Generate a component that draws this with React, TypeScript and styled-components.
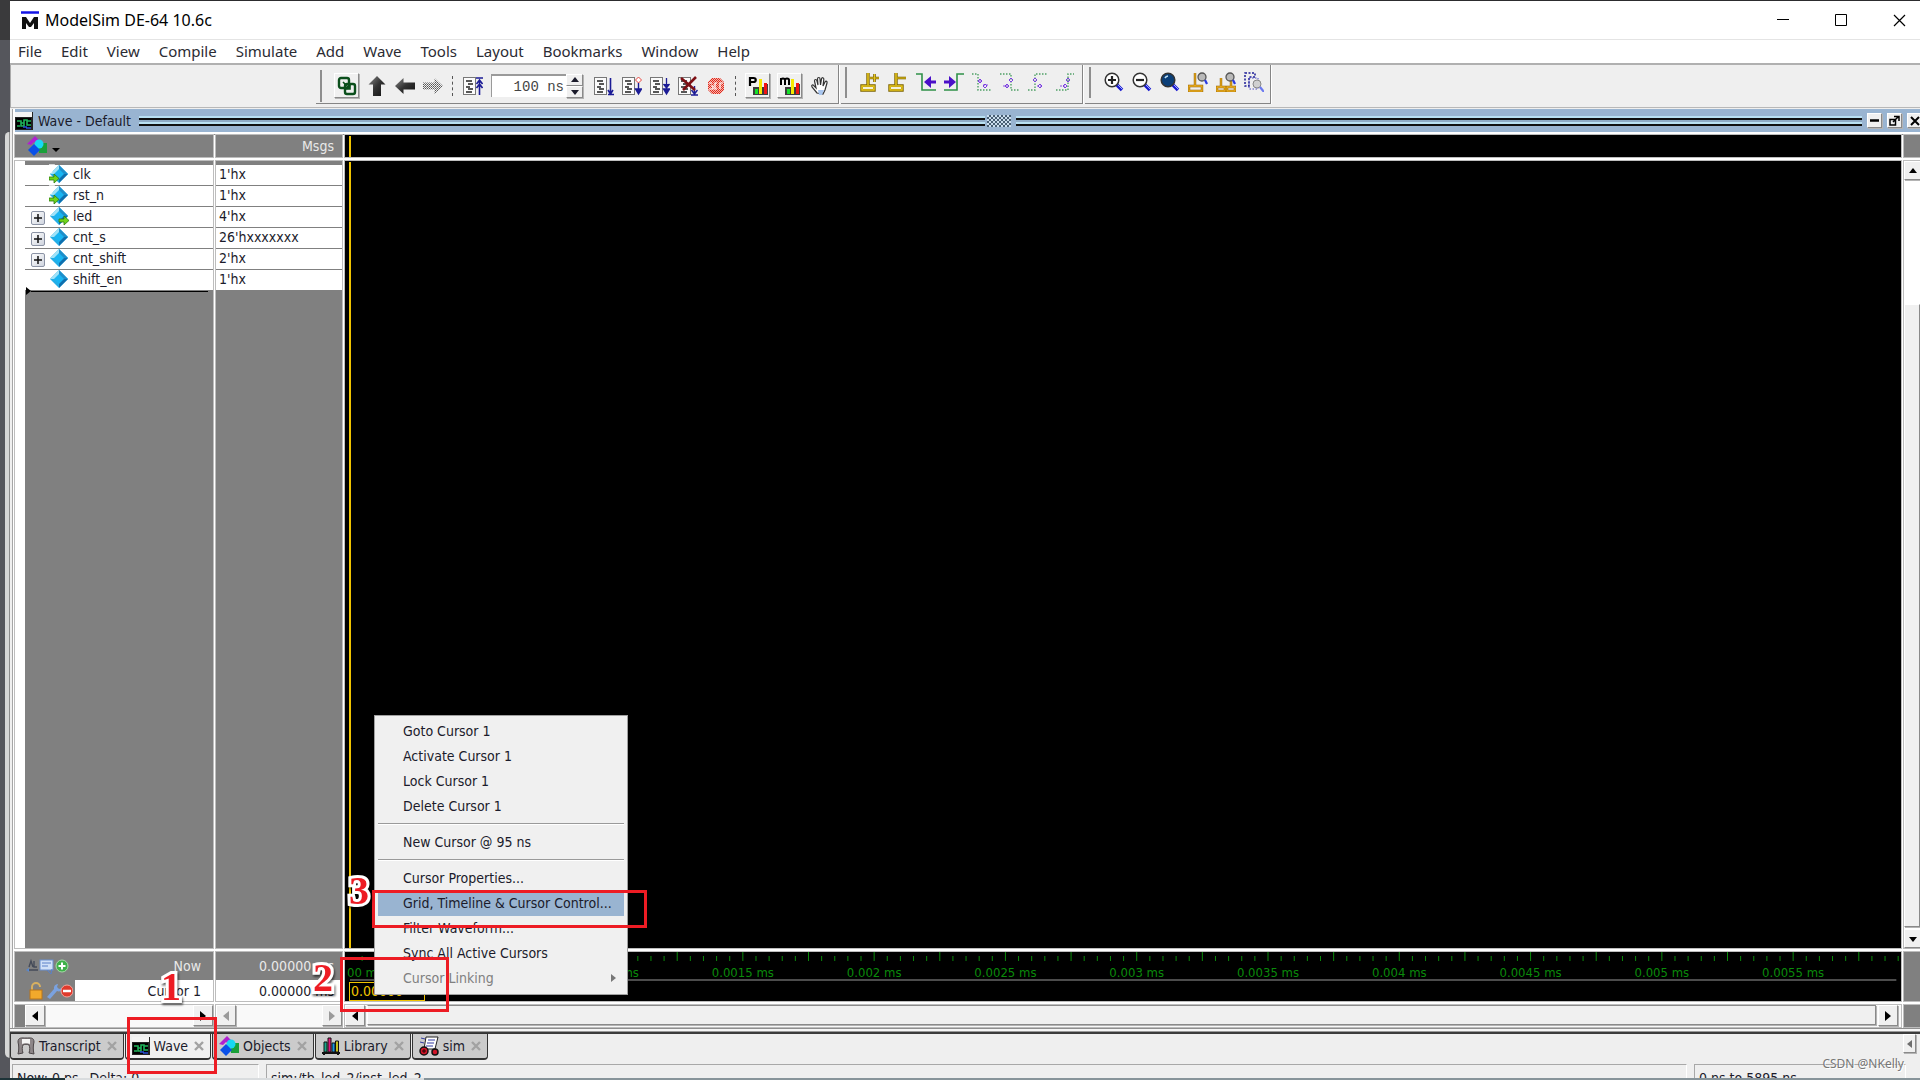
import React from 'react';
import styled, { createGlobalStyle, css } from 'styled-components';

const ui = `"DejaVu Sans Condensed", "Noto Sans", sans-serif`;
const sys = `"Noto Sans", "Open Sans", sans-serif`;

const Global = createGlobalStyle`
  *, *::before, *::after { box-sizing: border-box; }
  html, body { margin: 0; height: 100%; overflow: hidden; background: #55565c; }
  body { font-family: ${ui}; font-size: 13px; color: #1b1b2b; }
  button { font: inherit; color: inherit; border: 0; padding: 0; margin: 0; background: none; }
  svg { display: block; flex: none; }
`;

const bevel = css`
  background: #f0f0f0;
  border: 1px solid;
  border-color: #fff #8a8a8a #8a8a8a #fff;
  box-shadow: 1px 1px 0 #b4b4b4;
`;

/* ---------- shell ---------- */
const Desktop = styled.div`
  position: relative;
  display: flex;
  flex-direction: column;
  height: 100vh;
  overflow: hidden;
`;
const Screen = styled.div`
  display: flex;
  flex: 1;
  min-height: 0;
`;
const Backdrop = styled.div`
  flex: none;
  width: 10px;
  padding: 132px 0 20px 5px;
  background: linear-gradient(#3a3a3c 40px, #55565c 40px);
`;
const Sheet = styled.div`
  height: 100%;
  background: #d6d6d6;
  border-right: 1px solid #8c8c8c;
  border-radius: 5px 0 0 6px;
`;
const Main = styled.main`
  flex: 1;
  min-width: 0;
  display: flex;
  flex-direction: column;
  background: #efefef;
  border-top: 1px solid #2c2c2e;
`;
const Taskbar = styled.div`
  flex: none;
  height: 2px;
  background: linear-gradient(90deg, #1d3338 65px, #d9dcde 65px, #d9dcde 424px, #87949a 424px);
`;

/* ---------- title + menu ---------- */
const TitleBar = styled.header`
  display: flex;
  align-items: center;
  height: 39px;
  flex: none;
  padding-left: 11px;
  background: #fff;
  border-bottom: 1px solid #e4e4e4;
`;
const AppTitle = styled.h1`
  flex: 1;
  margin: 0 0 0 6px;
  font: 400 16px/22px ${sys};
  color: #000;
`;
const CaptionButton = styled.button`
  width: 58px;
  height: 38px;
  display: grid;
  place-items: center;
`;
const Captions = styled.div`
  display: flex;
  margin-right: -8px;
`;
const MenuBar = styled.nav`
  display: flex;
  align-items: center;
  flex: none;
  height: 25px;
  padding: 0 0 2px 8px;
  gap: 19px;
  background: #fff;
  border-bottom: 2px solid #b0b0b0;
`;
const MenuButton = styled.button`
  font: 400 15px/20px ${sys};
  color: #2b2b33;
`;

/* ---------- toolbar ---------- */
const ToolBar = styled.div`
  display: flex;
  flex: none;
  height: 43px;
  padding: 0 0 3px 305px;
  border-bottom: 1px solid #b8b8b8;
  border-left: 1px solid #aaa;
`;
const Group = styled.div<{ $end: number; $lift?: number; $drop?: number }>`
  display: flex;
  align-items: center;
  gap: 3px;
  padding: ${p => p.$drop || 0}px ${p => p.$end}px ${p => p.$lift || 0}px 0;
  margin-right: 2px;
  border: solid #858585;
  border-width: 0 1px 1px 0;
  box-shadow: 1px 0 0 #fff;
`;
const Handle = styled.span`
  align-self: stretch;
  width: 6px;
  margin: 2px 7px 1px 0;
  border-right: 2px solid #8e8e8e;
`;
const Dots = styled.span`
  width: 1px;
  height: 20px;
  margin: 0 4px;
  border-left: 1px dashed #555;
`;
const Tool = styled.button<{ $raised?: boolean }>`
  width: 25px;
  height: 25px;
  display: grid;
  place-items: center;
  ${p => p.$raised && bevel}
  ${p => p.$raised && 'margin: 0 2px;'}
`;
const Spin = styled.div`
  display: flex;
  height: 23px;
  margin: 0 5px 0 3px;
`;
const SpinInput = styled.input`
  width: 75px;
  height: 23px;
  padding: 0 2px 0 0;
  border: 0;
  border-top: 2px solid #9a9a9a;
  border-left: 1px solid #9a9a9a;
  text-align: right;
  font: 400 14px "Liberation Mono", monospace;
  color: #444;
  background: #fff;
`;
const SpinArrows = styled.div`
  display: grid;
  grid-template-rows: 1fr 1fr;
  width: 17px;
`;
const SpinArrow = styled.button`
  ${bevel}
  display: grid;
  place-items: center;
`;

/* ---------- wave window ---------- */
const WaveWindow = styled.section`
  flex: 1;
  min-height: 0;
  display: flex;
  flex-direction: column;
  margin: 1px 0 0 2px;
  padding-left: 2px;
  background: #fff;
  border-left: 1px solid #a6a6a6;
`;
const WaveTitle = styled.div`
  flex: none;
  display: flex;
  align-items: center;
  gap: 5px;
  height: 23px;
  background: #99b4d1;
  overflow: hidden;
`;
const WaveName = styled.h2`
  margin: 0;
  font: 400 14px/20px ${ui};
  white-space: nowrap;
`;
const Rails = styled.div`
  flex: 1;
  height: 10px;
  margin-left: 3px;
  background: linear-gradient(#b9e0f2 2px, #111 2px, #111 4px, #8fabc6 4px, #8fabc6 6px, #b9e0f2 6px, #b9e0f2 8px, #111 8px);
`;
const Grip = styled.span`
  width: 24px;
  height: 12px;
  margin: 0 -3px;
  background: repeating-conic-gradient(#33485c 0 25%, #d7e8f5 0 50%) 0 0 / 4px 4px;
  opacity: 0.8;
`;
const WinButtons = styled.div`
  display: flex;
  gap: 5px;
  margin-right: -2px;
`;
const WinButton = styled.button`
  ${bevel}
  width: 15px;
  height: 15px;
  display: grid;
  place-items: center;
`;
const Panes = styled.div`
  flex: 1;
  min-height: 0;
  display: grid;
  grid-template-columns: 198px 126px minmax(0, 1fr) 16px;
  grid-template-rows: 22px minmax(0, 1fr) 49px 22px;
  gap: 4px 3px;
  margin-top: 2px;
  padding-bottom: 1px;
  border-top: 1px solid #8c8c8c;
  background: #fff;
`;
const Cell = styled.div<{ $bg?: string }>`
  position: relative;
  min-width: 0;
  min-height: 0;
  background: ${p => p.$bg || '#808080'};
  box-shadow: 0 0 0 1px #bdbdbd;
`;
const HeadCell = styled(Cell)`
  display: flex;
  align-items: center;
  padding: 0 8px 0 12px;
`;
const MsgsLabel = styled.span`
  margin-left: auto;
  font-size: 14px;
  color: #e9e9e9;
`;
const DropMark = styled.span`
  margin: 8px 0 0 5px;
  border: solid transparent;
  border-width: 4px 4px 0;
  border-top-color: #000;
`;
const NamesBody = styled(Cell)`
  padding-left: 10px;
  padding-top: 4px;
  background: linear-gradient(90deg, #fff 10px, #808080 10px);
`;
const ValuesBody = styled(Cell)`
  padding-top: 4px;
`;
const Row = styled.div`
  display: flex;
  align-items: center;
  height: 21px;
  padding-bottom: 2px;
  background: #fff;
  border-bottom: 1px solid #808080;
  font-size: 14px;
  line-height: 18px;
`;
const NameRow = styled(Row)`
  padding-left: 6px;
  gap: 4px;
`;
const ValueRow = styled(Row)`
  padding-left: 3px;
`;
const Expander = styled.button<{ $hidden?: boolean }>`
  width: 14px;
  height: 14px;
  margin-top: 4px;
  visibility: ${p => (p.$hidden ? 'hidden' : 'visible')};
  border: 1px solid #8b93a5;
  border-radius: 2px;
  background: linear-gradient(135deg, #fff, #cfd4de);
  display: grid;
  place-items: center;
`;
const InsertLine = styled.div`
  display: flex;
  align-items: center;
  height: 10px;
  margin: -5px 5px 0 1px;
  &::before {
    content: '';
    border: solid transparent;
    border-width: 4px 0 4px 5px;
    border-left-color: #000;
  }
  &::after {
    content: '';
    flex: 1;
    height: 1px;
    background: #000;
  }
`;
const WaveView = styled(Cell)`
  background: #000;
`;
const CursorLine = styled.span`
  position: absolute;
  top: 1px;
  bottom: 0;
  left: 4px;
  width: 2px;
  background: #f0c400;
`;
const FootLine = styled.div<{ $active?: boolean }>`
  display: flex;
  align-items: center;
  height: ${p => (p.$active ? 21 : 28)}px;
  padding-left: 10px;
  font-size: 14px;
`;
const FootIcons = styled.div`
  display: flex;
  gap: 1px;
  width: 50px;
`;
const FootText = styled.span<{ $active?: boolean }>`
  flex: 1;
  align-self: stretch;
  display: flex;
  align-items: center;
  justify-content: flex-end;
  padding-right: 12px;
  color: ${p => (p.$active ? '#1b1b2b' : '#e9e9e9')};
  background: ${p => (p.$active ? '#fff' : 'transparent')};
`;
const FootValue = styled.div<{ $active?: boolean }>`
  display: flex;
  align-items: center;
  justify-content: flex-end;
  height: ${p => (p.$active ? 21 : 28)}px;
  padding-right: 8px;
  font-size: 14px;
  color: ${p => (p.$active ? '#1b1b2b' : '#e9e9e9')};
  background: ${p => (p.$active ? '#fff' : 'transparent')};
`;
const RulerCell = styled(Cell)`
  background: #000;
  overflow: hidden;
`;
const CursorTime = styled.span`
  display: block;
  width: 76px;
  height: 19px;
  margin: 1px 0 0 4px;
  padding-left: 1px;
  border: 1px solid #f0c400;
  font-size: 14px;
  line-height: 17px;
  color: #f0c400;
`;

/* ---------- scrollbars ---------- */
const HBar = styled(Cell)`
  display: flex;
  background: #f9f9f9;
`;
const HBarIndented = styled(HBar)`
  border-left: 10px solid #808080;
`;
const HBarWave = styled(HBar)`
  padding-right: 3px;
`;
const VBar = styled(Cell)`
  display: flex;
  flex-direction: column;
  background: #fff;
`;
const ArrowButton = styled.button<{ $v?: boolean; $off?: boolean }>`
  ${bevel}
  flex: none;
  width: ${p => (p.$v ? '17px' : '20px')};
  height: ${p => (p.$v ? '19px' : '21px')};
  display: grid;
  place-items: center;
  color: ${p => (p.$off ? '#9a9a9a' : '#000')};
`;
const Trough = styled.div`
  flex: 1;
`;
const HThumb = styled.div`
  ${bevel}
  flex: 1;
  height: 20px;
  margin: 0 2px;
  border-top-color: #8a8a8a;
`;
const VGap = styled.div`
  height: 124px;
`;
const VThumb = styled.div`
  ${bevel}
  flex: 1;
  margin-bottom: 2px;
`;

/* ---------- tabs / status ---------- */
const TabRow = styled.div`
  flex: none;
  display: flex;
  height: 34px;
  padding-top: 5px;
  background: linear-gradient(#8f8f8f 1px, #f6f6f6 1px, #f6f6f6 3px, #999 3px, #999 4px, #3c3c3c 4px, #3c3c3c 6px, transparent 6px);
`;
const Tab = styled.div<{ $active?: boolean }>`
  display: flex;
  align-items: center;
  height: 27px;
  margin-right: 1px;
  padding: 0 4px 0 6px;
  gap: 4px;
  font-size: 14px;
  background: ${p => (p.$active ? '#f0f0f0' : '#cbcbcb')};
  border: solid #333;
  border-width: 1px 1px 2px 1px;
  border-radius: 0 0 4px 4px;
`;
const TabLabel = styled.button`
  display: flex;
  align-items: center;
  gap: 4px;
`;
const CloseX = styled.button`
  width: 14px;
  height: 14px;
  display: grid;
  place-items: center;
`;
const TabScroll = styled.button`
  ${bevel}
  width: 13px;
  height: 19px;
  margin: 1px 4px 0 auto;
  display: grid;
  place-items: center;
`;
const StatusBar = styled.footer`
  flex: none;
  display: flex;
  gap: 7px;
  height: 16px;
  padding: 2px 14px 0 2px;
  overflow: hidden;
`;
const StatusBox = styled.div<{ $w?: number }>`
  flex: ${p => (p.$w ? `0 0 ${p.$w}px` : '1')};
  display: flex;
  gap: 11px;
  height: 24px;
  padding: 4px 0 0 4px;
  border: solid #a8a8a8;
  border-width: 1px 0 0 1px;
  border-right: 1px solid #fff;
  font-size: 14px;
  line-height: 18px;
  white-space: nowrap;
`;

/* ---------- context menu ---------- */
const Popup = styled.div`
  position: absolute;
  left: 374px;
  bottom: 85px;
  width: 254px;
  padding: 3px;
  background: #f0f0f0;
  border: 1px solid #a0a0a0;
`;
const PopupItem = styled.button<{ $hot?: boolean; $off?: boolean }>`
  display: flex;
  align-items: center;
  width: 100%;
  height: 25px;
  padding: 0 8px 1px 25px;
  font-size: 14px;
  text-align: left;
  color: ${p => (p.$off ? '#808080' : '#1b1b2b')};
  background: ${p => (p.$hot ? '#99b4d1' : 'transparent')};
`;
const SubArrow = styled.span`
  margin-left: auto;
  border: solid transparent;
  border-width: 4px 0 4px 5px;
  border-left-color: #777;
`;
const PopupRule = styled.hr`
  height: 2px;
  margin: 4px 0 5px;
  border: 0;
  border-top: 1px solid #9a9a9a;
  border-bottom: 1px solid #fff;
`;

/* ---------- annotations ---------- */
const Frame = styled.div<{ $x: number; $b: number; $w: number; $h: number }>`
  position: absolute;
  left: ${p => p.$x}px;
  bottom: ${p => p.$b}px;
  width: ${p => p.$w}px;
  height: ${p => p.$h}px;
  border: 3px solid #ed1c24;
  pointer-events: none;
`;
const Step = styled.span<{ $x: number; $b: number }>`
  position: absolute;
  left: ${p => p.$x}px;
  bottom: ${p => p.$b}px;
  font: 700 40px/40px "Liberation Serif", serif;
  color: #ed1c24;
  -webkit-text-stroke: 6px #fff;
  paint-order: stroke fill;
  filter: drop-shadow(1px 2px 1px rgba(0, 0, 0, 0.6));
`;
const Watermark = styled.span`
  position: absolute;
  right: 16px;
  bottom: 7px;
  font: 400 12px/18px ${sys};
  color: #777;
  text-shadow: 1px 1px 0 #fff;
`;

/* ---------- icons ---------- */
const Svg = ({ w = 20, h = w, children }: { w?: number; h?: number; children: React.ReactNode }) => (
  <svg width={w} height={h} viewBox={`0 0 ${w} ${h}`} fill="none" aria-hidden="true">{children}</svg>
);
const Logo = () => (
  <Svg w={18} h={19}>
    <path d="M0 1.5h18" stroke="#1414e6" strokeWidth="2.5" />
    <path d="M1 18V6h4l4 6 4-6h4v12h-4v-6l-3 4H8l-3-4v6z" fill="#111" />
  </Svg>
);
const Tri = ({ d }: { d: 'l' | 'r' | 'u' | 'd' }) => {
  const paths = { l: 'M8 0v10L2 5z', r: 'M2 0v10l6-5z', u: 'M1 7h8L5 2z', d: 'M1 3h8L5 8z' };
  return <Svg w={10}><path d={paths[d]} fill="currentColor" /></Svg>;
};
const Cross = ({ s, c, t }: { s: number; c: string; t: number }) => (
  <Svg w={s}><path d={`M1 1L${s - 1} ${s - 1}M${s - 1} 1L1 ${s - 1}`} stroke={c} strokeWidth={t} /></Svg>
);
const LinkIcon = () => (
  <Svg>
    <rect x="2" y="2" width="10" height="10" rx="2" stroke="#0b4f1c" strokeWidth="2.4" />
    <rect x="8" y="8" width="10" height="10" rx="2" stroke="#0b4f1c" strokeWidth="2.4" />
    <path d="M6 6l7 7m0-5v5H8" stroke="#0b4f1c" strokeWidth="1.6" />
  </Svg>
);
const Defs = () => (
  <svg width="0" height="0" style={{ position: 'absolute' }} aria-hidden="true">
    <defs>
      <linearGradient id="steel" x1="0" y1="0" x2="1" y2="1"><stop offset="0" stopColor="#888" /><stop offset=".5" stopColor="#333" /><stop offset="1" stopColor="#111" /></linearGradient>
      <pattern id="mesh" width="2" height="2" patternUnits="userSpaceOnUse"><rect width="1" height="1" fill="#555" /><rect x="1" y="1" width="1" height="1" fill="#777" /></pattern>
      <pattern id="redmesh" width="2" height="2" patternUnits="userSpaceOnUse"><rect width="2" height="2" fill="#f6b5ac" /><rect width="1" height="1" fill="#e0281c" /><rect x="1" y="1" width="1" height="1" fill="#e0281c" /></pattern>
    </defs>
  </svg>
);
const UpIcon = () => <Svg><path d="M10 0l8.500 8.500h-4.500V20H6V8.500H1.500z" fill="url(#steel)" /></Svg>;
const BackIcon = () => <Svg><path d="M0 10l8.500-8v4.500H20v7H8.500V18z" fill="url(#steel)" /></Svg>;
const FwdIcon = () => <Svg><path d="M20 10l-8.500-8v4.500H0v7h11.500V18z" fill="url(#mesh)" /></Svg>;
const Page = () => (
  <>
    <rect x="0.5" y="1.5" width="12" height="17" fill="#fbfbfb" stroke="#777" />
    <path d="M3 5h6M5 8h5M3 11h4M5 13h5M3 16h6" stroke="#222" strokeWidth="1.5" />
  </>
);
const DocIcon = ({ kind }: { kind: 'restart' | 'run' | 'cont' | 'all' | 'break' }) => (
  <Svg>
    <Page />
    {kind === 'restart' && <path d="M13 2h7M16.5 19V4M13.500 8l3-4 3 4M13.500 12l3-4 3 4" stroke="#1c1c96" strokeWidth="1.6" />}
    {kind === 'run' && <path d="M16.500 2v15M14 18.500h6M14 14l2.500 4 2.500-4" stroke="#1c1c96" strokeWidth="1.6" />}
    {kind === 'cont' && <><path d="M16.500 7v11M13.500 13h6l-3 5z" stroke="#1c1c96" fill="#1c1c96" strokeWidth="1.4" /><path d="M16.500 1l3 3-3 3-3-3z" stroke="#e8443c" fill="#fff" /></>}
    {kind === 'all' && <path d="M16.500 2v16M13.500 8l3 4 3-4M13.500 13l3 5 3-5z" stroke="#1c1c96" fill="#1c1c96" strokeWidth="1.3" />}
    {kind === 'break' && <><path d="M16.500 10v8M13.500 14l3 4 3-4M13 19h7" stroke="#1c1c96" strokeWidth="1.4" /><path d="M3 2l14 12M18 1L5 14" stroke="#7d0f14" strokeWidth="2.6" /></>}
  </Svg>
);
const StopIcon = () => (
  <Svg>
    <path d="M6 2h8l4 4v8l-4 4H6l-4-4V6z" fill="url(#redmesh)" />
    <path d="M3 7h3M5 10h2v3H3M11 7H9v6h2M14 13V7h3" stroke="#fff" strokeWidth="1.2" />
  </Svg>
);
const ProfIcon = ({ m }: { m?: boolean }) => (
  <Svg>
    <path d="M5 19h15V8h-4v3H5z" fill="#3d3d3d" />
    <path d="M7 13h3v5H7z" fill="#16e02a" /><path d="M11 3h3v15h-3z" fill="#f6e800" /><path d="M16 7h3v11h-3z" fill="#f01414" />
    {m
      ? <path d="M1 9V2M1 4c0-2 4-2 4 0v5M5 4c0-2 4-2 4 0v5" stroke="#000" strokeWidth="2" />
      : <path d="M2 10V2h3.500c3 0 3 4 0 4H2" stroke="#000" strokeWidth="2.200" />}
  </Svg>
);
const HandIcon = () => (
  <Svg>
    <path d="M7 17L2 11c-1-2 1-3 2-1l2 2L4.500 5c0-2 2-2 2.500 0l1 4-.5-6c0-2 2.500-2 2.500 0l.5 6 1-6c.3-2 2.500-1.500 2.300.5L13 10l2-4c1-1.500 2.500-.5 2 1l-2 7-2 4z" fill="#fff" stroke="#333" strokeWidth="1.200" />
    <path d="M8 14l6 0-2 5H9z" fill="#a9c6ef" />
  </Svg>
);
const PostIcon = ({ minus }: { minus?: boolean }) => (
  <Svg>
    <path d="M8 1v12M2 14h12v4H2z" stroke="#7d6400" strokeWidth="3.400" />
    <path d="M8 1v12M2 14h12v4H2z" stroke="#e9c71c" strokeWidth="1.500" />
    <path d="M3 15h10v2H3z" fill="#f4f0d8" />
    <path d={minus ? 'M9 6h9' : 'M10 6h9M14.500 2v8'} stroke="#7d6400" strokeWidth="2.600" />
    <path d={minus ? 'M9 6h9' : 'M10 6h9M14.500 2v8'} stroke="#e9c71c" strokeWidth="1" />
  </Svg>
);
const EdgeIcon = ({ next }: { next?: boolean }) => (
  <Svg>
    <path d={next ? 'M0 18h13V2h7' : 'M0 2h6v16h14'} stroke="#2f9148" strokeWidth="1.600" />
    <path d={next ? 'M0 8.500h5V4l7 6-7 6v-4.500H0z' : 'M20 8.500h-5V4l-7 6 7 6v-4.500h5z'} fill="#4a10c8" />
  </Svg>
);
const GhostEdge = ({ k }: { k: number }) => {
  const d = ['M0 2h6v16h14', 'M0 2h11v16h9', 'M0 18h7V2h12', 'M0 18h12V2h6'][k];
  const a = ['M7 9h3M11 13h6', 'M11 9v0M3 14h6', 'M8 9v0M9 14h6', 'M12 9v0M4 14h6'][k];
  const c = [[8, 9], [11, 8], [7, 8], [12, 8]][k];
  const e = [[13, 14], [7, 14], [12, 14], [9, 14]][k];
  return (
    <Svg>
      <path d={d} stroke="#4fa066" strokeWidth="1.400" strokeDasharray="1.500 1.500" />
      <path d={a} stroke="#8a4fe0" strokeWidth="1" strokeDasharray="2 1" />
      <path d={`M${c[0]} ${c[1] - 2}l2 2-2 2-2-2z M${e[0]} ${e[1] - 2}l2 2-2 2-2-2z`} stroke="#7a3fe0" strokeWidth="1" />
    </Svg>
  );
};
const ZoomIcon = ({ k }: { k: 'in' | 'out' | 'full' }) => (
  <Svg>
    <path d="M12 12l6 6" stroke="#1a1ad0" strokeWidth="3.600" />
    <path d="M13 12l5.500 5.500" stroke="#9fb0ff" strokeWidth="1" />
    <circle cx="8" cy="8" r="6.800" fill={k === 'full' ? '#0b3f78' : '#fff'} stroke="#333" strokeWidth="1.500" />
    {k === 'full' && <path d="M5 6a4 4 0 013-2" stroke="#bfe0f4" strokeWidth="1.600" />}
    {k !== 'full' && <path d={k === 'in' ? 'M4 8h8M8 4v8' : 'M4 8h8'} stroke="#222" strokeWidth="2.200" />}
  </Svg>
);
const ZoomCursor = ({ two }: { two?: boolean }) => (
  <Svg w={20}>
    <path d={two ? 'M5 6v9M1 15h8v4H1zM15 8v7M11 15h8v4h-8z' : 'M7 1v13M1 14h13v5H1z'} stroke="#8a5a00" strokeWidth="2.400" />
    <path d={two ? 'M5 6v9M1 15h8v4H1zM15 8v7M11 15h8v4h-8z' : 'M7 1v13M1 14h13v5H1z'} stroke="#eeb020" strokeWidth="1.300" />
    <circle cx="14" cy="5" r="4" fill="#b9b9b9" stroke="#555" strokeWidth="1.300" />
    <path d="M17 8l2 4" stroke="#2a3ae0" strokeWidth="2.200" />
  </Svg>
);
const ZoomBox = () => (
  <Svg w={20}>
    <path d="M1 1h10v4H5v9H1z" stroke="#1c1c96" strokeWidth="1.500" strokeDasharray="2 1.500" />
    <path d="M5 6h9v11H5z" stroke="#4a4ac0" strokeDasharray="1.500 1.500" />
    <circle cx="13" cy="12" r="4" fill="#d0d0d0" stroke="#888" />
    <path d="M16 15l4 5" stroke="#6a78f0" strokeWidth="2.200" />
  </Svg>
);
const WaveIcon = () => (
  <Svg w={18}>
    <rect width="18" height="18" fill="#222" /><rect width="17" height="5" fill="#f4f4f4" />
    <rect x="1" y="6" width="15" height="11" fill="#000" />
    <path d="M2 9h4v5h3V8h3v5h4M2 14h3M12 9h4M6 11h3" stroke="#1fb45a" strokeWidth="1.600" />
    <path d="M8 15h4M11 16h5" stroke="#2a4fd8" strokeWidth="1.300" />
  </Svg>
);
const ObjectsIcon = () => (
  <Svg>
    <path d="M0 8L8 0l6 6-3 3-4-3-3 3z" fill="#b020d0" /><path d="M11 7h9v10h-8z" fill="#1aa03a" />
    <circle cx="12" cy="8" r="4.500" fill="#18d8f4" /><path d="M7 8l6 6-6 6-6-6z" fill="#0a50e8" />
  </Svg>
);
const Diamond = ({ arrow }: { arrow?: 'in' | 'out' }) => (
  <Svg w={20}>
    <path d="M10 1l9 9-9 9-9-9z" fill="#22aee8" />
    <path d="M10 1L1 10h9z" fill="#9fe2f8" /><path d="M10 10v9l9-9z" fill="#0f6fae" /><path d="M10 1l9 9h-9z" fill="#1e8fcb" />
    <path d="M10 5l5 5-5 5-5-5z" fill="#19b5f2" />
    {arrow && (
      <g transform={arrow === 'in' ? 'translate(0 10)' : 'translate(10 10)'}>
        {arrow === 'in' && <path d="M0-10h6l-3 9H0z" fill="#fff" fillOpacity=".7" />}
        <path d="M0 3h5V0l5 4.500-5 4.500V6H0z" fill="#6fd51c" stroke="#2b7a10" strokeWidth=".8" />
      </g>
    )}
  </Svg>
);
const FootSet = ({ active }: { active?: boolean }) => (
  <svg width="48" height="18" viewBox="0 0 48 18" fill="none" aria-hidden="true">
    {active ? (
      <>
        <path d="M7 8V5a4 4 0 018 0" stroke="#d8b060" strokeWidth="2" /><rect x="5" y="8" width="12" height="9" fill="#f2a92c" stroke="#b8741a" />
        <path d="M22 15l7-8a4 4 0 014-5l-1 3 2 2 3-1c0 3-3 4-5 3l-7 8z" fill="#7aa2e0" />
        <circle cx="42" cy="9" r="6" fill="#e03a2c" stroke="#f3a59d" /><path d="M38 9h8" stroke="#fff" strokeWidth="2.500" />
      </>
    ) : (
      <>
        <path d="M2 13h11M4 10l2-6 2 6M9 4v6h3" stroke="#444a58" strokeWidth="1.400" /><path d="M1 13l3-2v4z" fill="#5a8ad0" />
        <rect x="15" y="3" width="13" height="10" fill="#cfe0f8" stroke="#6a90d0" /><path d="M17 6h9M17 9h6M22 13l4 4 1-5" stroke="#5a80c8" />
        <circle cx="37" cy="9" r="6" fill="#3fb04a" stroke="#a5dca8" /><path d="M33.500 9h7M37 5.500v7" stroke="#fff" strokeWidth="2" />
      </>
    )}
  </svg>
);
const TranscriptIcon = () => (
  <Svg w={18}>
    <path d="M1 17c1-4 1-8 0-12 0-5 4-4 8-4s8-1 8 4c-1 4-1 8 0 12l-5-1c1-3 1-6 0-8-1-1-5-1-6 0-1 2-1 5 0 8z" fill="#8d8688" stroke="#4c4648" />
    <path d="M5 2h8v5c-2-1-6-1-8 0z" fill="#f4f4f4" />
  </Svg>
);
const LibraryIcon = () => (
  <Svg w={18}>
    <path d="M2 5h3v10H2z" fill="#19a88a" stroke="#111" /><path d="M6 1h3v14H6z" fill="#e0187c" stroke="#111" />
    <path d="M10 6h3v9h-3z" fill="#1898e8" stroke="#111" /><path d="M13.500 4h3v11h-3z" fill="#c8c020" stroke="#111" />
    <path d="M0 16h18M2 15v3M16 15v3" stroke="#111" strokeWidth="2" />
  </Svg>
);
const SimIcon = () => (
  <Svg>
    <path d="M7 1h12l-3 12H5z" fill="#fff" stroke="#222" /><path d="M9 4h7M8 7h7M7 10h7M2 2l4 1M1 6l4 1" stroke="#3038a0" />
    <circle cx="5" cy="15" r="4" fill="#d01428" stroke="#111" strokeWidth="1.500" /><circle cx="16" cy="16" r="3" fill="#d01428" stroke="#111" strokeWidth="1.500" />
    <path d="M3 15h4M5 13v4" stroke="#200" />
  </Svg>
);

/* ---------- time ruler ---------- */
const SPAN = 5926;
const pct = (ns: number) => `${(ns / SPAN) * 100}%`;
const Ruler = () => {
  const ticks = Array.from({ length: 118 }, (_, i) => (i + 1) * 50);
  const labels = Array.from({ length: 11 }, (_, i) => (i + 1) * 500);
  return (
    <svg width="100%" height="29" role="img" aria-label="Timeline">
      <svg x="4" width="100%" height="29" overflow="visible">
        {ticks.map(t => (
          <line key={t} x1={pct(t)} x2={pct(t)} y1={t % 250 ? 4 : 0} y2="9" stroke="#0a8a0a" strokeWidth="1" />
        ))}
        <text x="-2" y="25" fill="#0a8a0a" fontSize="13">00 ms</text>
        {labels.map(t => (
          <text key={t} x={pct(t)} y="25" fill="#0a8a0a" fontSize="13" textAnchor="middle">{t / 1000000} ms</text>
        ))}
      </svg>
      <line x1="5" x2="99.700%" y1="28" y2="28" stroke="#666" strokeWidth="1.500" />
    </svg>
  );
};

/* ---------- data ---------- */
const MENUS = ['File', 'Edit', 'View', 'Compile', 'Simulate', 'Add', 'Wave', 'Tools', 'Layout', 'Bookmarks', 'Window', 'Help'];
const SIGNALS: { name: string; value: string; open?: boolean; arrow?: 'in' | 'out' }[] = [
  { name: 'clk', value: "1'hx", arrow: 'in' },
  { name: 'rst_n', value: "1'hx", arrow: 'in' },
  { name: 'led', value: "4'hx", open: true, arrow: 'out' },
  { name: 'cnt_s', value: "26'hxxxxxxx", open: true },
  { name: 'cnt_shift', value: "2'hx", open: true },
  { name: 'shift_en', value: "1'hx" },
];
const TABS = [
  { name: 'Transcript', icon: <TranscriptIcon /> },
  { name: 'Wave', icon: <WaveIcon />, active: true },
  { name: 'Objects', icon: <ObjectsIcon /> },
  { name: 'Library', icon: <LibraryIcon /> },
  { name: 'sim', icon: <SimIcon /> },
];

export default function App() {
  return (
    <Desktop>
      <Global />
      <Defs />
      <Screen>
        <Backdrop><Sheet /></Backdrop>
        <Main>
          <TitleBar>
            <Logo />
            <AppTitle>ModelSim DE-64 10.6c</AppTitle>
            <Captions>
              <CaptionButton aria-label="Minimize"><Svg w={12}><path d="M0 5.500h12" stroke="#000" /></Svg></CaptionButton>
              <CaptionButton aria-label="Maximize"><Svg w={12}><path d="M.5.5h11v11H.5z" stroke="#000" /></Svg></CaptionButton>
              <CaptionButton aria-label="Close"><Cross s={13} c="#000" t={1.2} /></CaptionButton>
            </Captions>
          </TitleBar>
          <MenuBar>{MENUS.map(m => <MenuButton key={m}>{m}</MenuButton>)}</MenuBar>
          <ToolBar>
            <Group $end={6} $drop={3}>
              <Handle />
              <Tool $raised aria-label="Link"><LinkIcon /></Tool>
              <Tool aria-label="Up"><UpIcon /></Tool>
              <Tool aria-label="Back"><BackIcon /></Tool>
              <Tool aria-label="Forward"><FwdIcon /></Tool>
              <Dots />
              <Tool aria-label="Restart"><DocIcon kind="restart" /></Tool>
              <Spin>
                <SpinInput aria-label="Run length" defaultValue="100 ns" />
                <SpinArrows>
                  <SpinArrow aria-label="Increase"><Tri d="u" /></SpinArrow>
                  <SpinArrow aria-label="Decrease"><Tri d="d" /></SpinArrow>
                </SpinArrows>
              </Spin>
              <Tool aria-label="Run"><DocIcon kind="run" /></Tool>
              <Tool aria-label="Continue run"><DocIcon kind="cont" /></Tool>
              <Tool aria-label="Run all"><DocIcon kind="all" /></Tool>
              <Tool aria-label="Break"><DocIcon kind="break" /></Tool>
              <Tool aria-label="Stop"><StopIcon /></Tool>
              <Dots />
              <Tool $raised aria-label="Performance profile"><ProfIcon /></Tool>
              <Tool $raised aria-label="Memory profile"><ProfIcon m /></Tool>
              <Tool aria-label="Pan"><HandIcon /></Tool>
            </Group>
            <Group $end={4} $lift={4}>
              <Handle />
              <Tool aria-label="Insert cursor"><PostIcon /></Tool>
              <Tool aria-label="Delete cursor"><PostIcon minus /></Tool>
              <Tool aria-label="Previous transition"><EdgeIcon /></Tool>
              <Tool aria-label="Next transition"><EdgeIcon next /></Tool>
              {['Previous falling edge', 'Next falling edge', 'Previous rising edge', 'Next rising edge'].map((n, i) => (
                <Tool key={n} aria-label={n}><GhostEdge k={i} /></Tool>
              ))}
            </Group>
            <Group $end={4} $lift={4}>
              <Handle />
              <Tool aria-label="Zoom in"><ZoomIcon k="in" /></Tool>
              <Tool aria-label="Zoom out"><ZoomIcon k="out" /></Tool>
              <Tool aria-label="Zoom full"><ZoomIcon k="full" /></Tool>
              <Tool aria-label="Zoom on cursor"><ZoomCursor /></Tool>
              <Tool aria-label="Zoom between cursors"><ZoomCursor two /></Tool>
              <Tool aria-label="Zoom area"><ZoomBox /></Tool>
            </Group>
          </ToolBar>

          <WaveWindow>
            <WaveTitle>
              <WaveIcon />
              <WaveName>Wave - Default</WaveName>
              <Rails />
              <Grip />
              <Rails />
              <WinButtons>
                <WinButton aria-label="Minimize pane"><Svg w={11}><path d="M1 5.500h9" stroke="#000" strokeWidth="2.500" /></Svg></WinButton>
                <WinButton aria-label="Undock pane"><Svg w={11}><path d="M1 4.500h5.500V10H1zM4 7l5-5M5 1.500h5V6" stroke="#000" strokeWidth="1.500" /></Svg></WinButton>
                <WinButton aria-label="Close pane"><Cross s={10} c="#000" t={2} /></WinButton>
              </WinButtons>
            </WaveTitle>
            <Panes>
              <HeadCell><ObjectsIcon /><DropMark /></HeadCell>
              <HeadCell><MsgsLabel>Msgs</MsgsLabel></HeadCell>
              <WaveView><CursorLine /></WaveView>
              <Cell />

              <NamesBody>
                {SIGNALS.map(s => (
                  <NameRow key={s.name}>
                    <Expander $hidden={!s.open} aria-label={`Expand ${s.name}`}>
                      <Svg w={8}><path d="M0 4h8M4 0v8" stroke="#111" strokeWidth="1.500" /></Svg>
                    </Expander>
                    <Diamond arrow={s.arrow} />
                    <span>{s.name}</span>
                  </NameRow>
                ))}
                <InsertLine />
              </NamesBody>
              <ValuesBody>
                {SIGNALS.map(s => <ValueRow key={s.name}>{s.value}</ValueRow>)}
              </ValuesBody>
              <WaveView><CursorLine /></WaveView>
              <VBar>
                <ArrowButton $v aria-label="Scroll up"><Tri d="u" /></ArrowButton>
                <VGap />
                <VThumb />
                <ArrowButton $v aria-label="Scroll down"><Tri d="d" /></ArrowButton>
              </VBar>

              <Cell>
                <FootLine><FootIcons><FootSet /></FootIcons><FootText>Now</FootText></FootLine>
                <FootLine $active><FootIcons><FootSet active /></FootIcons><FootText $active>Cursor 1</FootText></FootLine>
              </Cell>
              <Cell>
                <FootValue>0.00000 ms</FootValue>
                <FootValue $active>0.00000 ms</FootValue>
              </Cell>
              <RulerCell>
                <Ruler />
                <CursorTime>0.00000 ms</CursorTime>
              </RulerCell>
              <Cell />

              <HBarIndented>
                <ArrowButton aria-label="Scroll names left"><Tri d="l" /></ArrowButton>
                <Trough />
                <ArrowButton aria-label="Scroll names right"><Tri d="r" /></ArrowButton>
              </HBarIndented>
              <HBar>
                <ArrowButton $off aria-label="Scroll values left"><Tri d="l" /></ArrowButton>
                <Trough />
                <ArrowButton $off aria-label="Scroll values right"><Tri d="r" /></ArrowButton>
              </HBar>
              <HBarWave>
                <ArrowButton aria-label="Scroll wave left"><Tri d="l" /></ArrowButton>
                <HThumb />
                <ArrowButton aria-label="Scroll wave right"><Tri d="r" /></ArrowButton>
              </HBarWave>
              <Cell />
            </Panes>
          </WaveWindow>

          <TabRow>
            {TABS.map(t => (
              <Tab key={t.name} $active={t.active}>
                <TabLabel>{t.icon}{t.name}</TabLabel>
                <CloseX aria-label={`Close ${t.name}`}><Cross s={10} c="#a2a2a2" t={2.4} /></CloseX>
              </Tab>
            ))}
            <TabScroll aria-label="Scroll tabs"><Svg w={8}><path d="M6 0v8L1 4z" fill="#6e6e6e" /></Svg></TabScroll>
          </TabRow>
          <StatusBar>
            <StatusBox $w={247}><span>Now: 0 ps</span><span>Delta: 0</span></StatusBox>
            <StatusBox>sim:/tb_led_2/inst_led_2</StatusBox>
            <StatusBox $w={212}>0 ns to 5895 ns</StatusBox>
          </StatusBar>
        </Main>
      </Screen>
      <Taskbar />

      <Popup>
        <PopupItem>Goto Cursor 1</PopupItem>
        <PopupItem>Activate Cursor 1</PopupItem>
        <PopupItem>Lock Cursor 1</PopupItem>
        <PopupItem>Delete Cursor 1</PopupItem>
        <PopupRule />
        <PopupItem>New Cursor @ 95 ns</PopupItem>
        <PopupRule />
        <PopupItem>Cursor Properties...</PopupItem>
        <PopupItem $hot>Grid, Timeline &amp; Cursor Control...</PopupItem>
        <PopupItem>Filter Waveform...</PopupItem>
        <PopupItem>Sync All Active Cursors</PopupItem>
        <PopupItem $off>Cursor Linking<SubArrow /></PopupItem>
      </Popup>

      <Frame $x={127} $b={6} $w={90} $h={57} />
      <Frame $x={340} $b={68} $w={109} $h={55} />
      <Frame $x={372} $b={152} $w={275} $h={38} />
      <Step $x={161} $b={73}>1</Step>
      <Step $x={313} $b={82}>2</Step>
      <Step $x={349} $b={169}>3</Step>
      <Watermark>CSDN @NKelly</Watermark>
    </Desktop>
  );
}
